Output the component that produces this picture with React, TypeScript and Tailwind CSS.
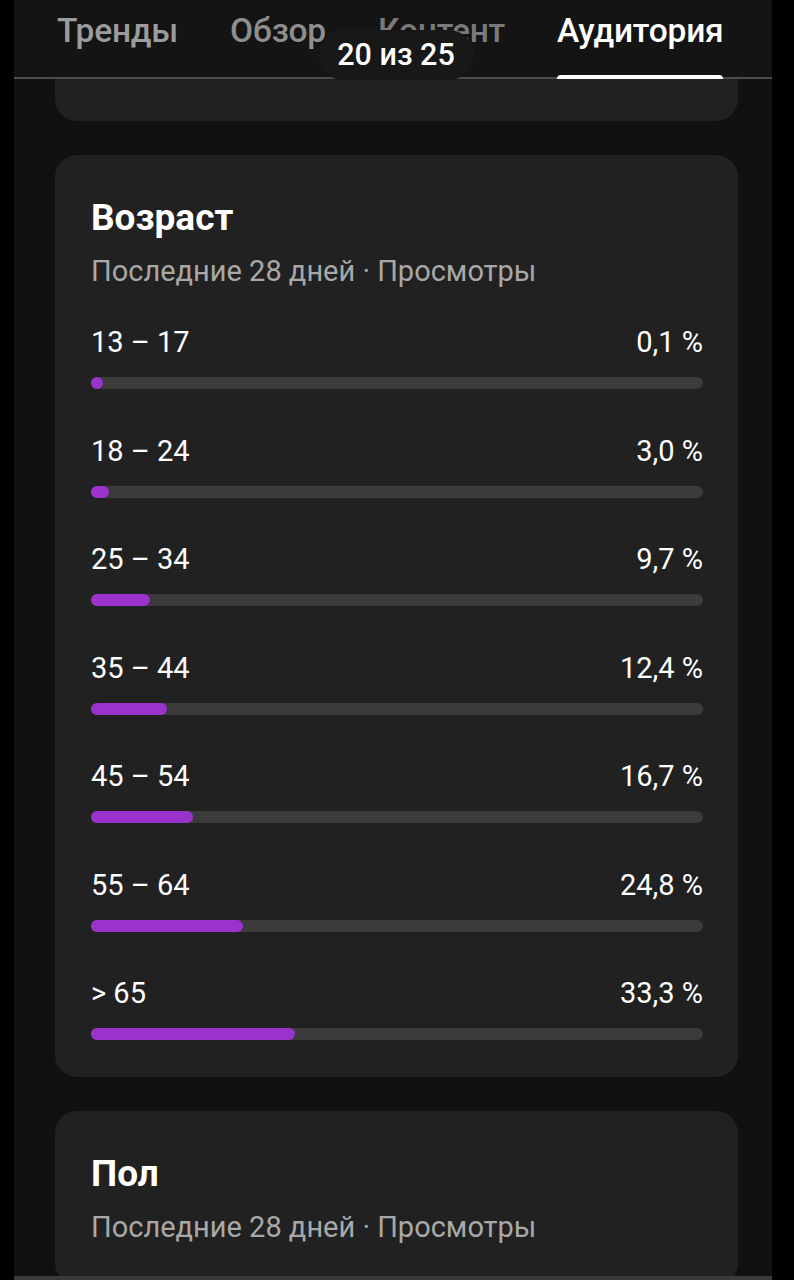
const ages = [
  { label: "13 – 17", value: 0.1 },
  { label: "18 – 24", value: 3.0 },
  { label: "25 – 34", value: 9.7 },
  { label: "35 – 44", value: 12.4 },
  { label: "45 – 54", value: 16.7 },
  { label: "55 – 64", value: 24.8 },
  { label: "> 65", value: 33.3 },
];

const tabs = [
  { name: "Тренды", cls: "text-[#9c9c9c]" },
  { name: "Обзор", cls: "text-[#8e8e8e]" },
  { name: "Контент", cls: "text-[#7a7a7a]" },
  { name: "Аудитория", cls: "text-white" },
];

function fmt(v: number) {
  return v.toFixed(1).replace(".", ",") + " %";
}

export default function App() {
  return (
    <div
      className="w-[794px] h-[1280px] bg-black overflow-hidden"
      style={{ fontFamily: "Roboto, 'Noto Sans', sans-serif" }}
    >
      <div className="relative ml-[14px] w-[758px] h-[1280px] bg-[#111111] overflow-hidden flex flex-col">
        {/* tabs */}
        <div className="relative z-10 h-[79px] shrink-0 bg-[#141414] border-b-2 border-[#4d4d4d] flex items-start pl-[43px] gap-[52px]">
          {tabs.map((t, i) => (
            <div key={t.name} className="relative h-full flex flex-col">
              <span className={`pt-[11px] text-[33.5px] leading-[40px] font-medium tracking-[-0.2px] ${t.cls}`}>
                {t.name}
              </span>
              {i === 3 && (
                <div className="absolute left-0 right-0 bottom-[-2px] h-[4px] bg-white rounded-t-sm" />
              )}
            </div>
          ))}
        </div>

        {/* toast */}
        <div className="absolute z-20 left-[304px] top-[30px] w-[156px] h-[50px] rounded-full bg-[#181818] flex items-center justify-center">
          <span className="text-white text-[30.5px] font-medium leading-none">20 из 25</span>
        </div>

        <div className="flex flex-col gap-[34px] pl-[41px] pr-[34px]">
          {/* clipped card above */}
          <div className="h-[42px] rounded-b-[22px] bg-[#212121]" />

          {/* age card */}
          <div className="rounded-[22px] bg-[#212121] pl-[36px] pr-[35px] pt-[41px] pb-[37px] flex flex-col">
            <h2 className="text-white text-[37px] font-bold leading-[44px]">Возраст</h2>
            <p className="mt-[13px] text-[#a8a8a8] text-[29px] leading-[36px]">
              Последние 28 дней · Просмотры
            </p>
            <div className="mt-[36px] flex flex-col gap-[44.5px]">
              {ages.map((a) => (
                <div key={a.label} className="flex flex-col">
                  <div className="flex justify-between text-white text-[29px] leading-[34px]">
                    <span>{a.label}</span>
                    <span>{fmt(a.value)}</span>
                  </div>
                  <div className="mt-[18px] h-[12px] rounded-full bg-[#3b3b3b]">
                    <div
                      className="h-full rounded-full bg-[#9a33cc]"
                      style={{ width: `max(12px, ${a.value}%)` }}
                    />
                  </div>
                </div>
              ))}
            </div>
          </div>

          {/* gender card */}
          <div className="rounded-[22px] bg-[#212121] pl-[36px] pr-[35px] pt-[41px] pb-[40px] flex flex-col">
            <h2 className="text-white text-[37px] font-bold leading-[44px]">Пол</h2>
            <p className="mt-[13px] text-[#a8a8a8] text-[29px] leading-[36px]">
              Последние 28 дней · Просмотры
            </p>
          </div>
        </div>

        <div className="absolute left-0 right-0 bottom-0 h-[4px] bg-[#3a3a3a]" />
      </div>
    </div>
  );
}
